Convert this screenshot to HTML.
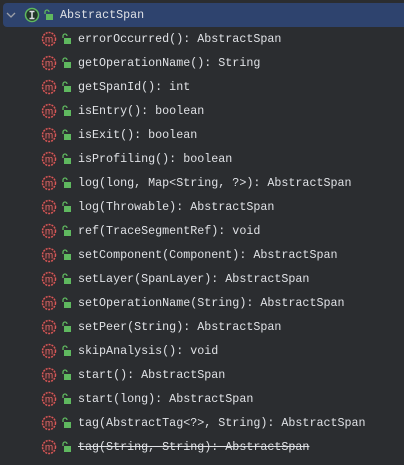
<!DOCTYPE html>
<html><head><style>
body{margin:0;width:404px;height:465px;background:#2b2d30;overflow:hidden;font-family:"Liberation Mono",monospace;font-size:11.7px;color:#dfe1e5}
.sel{position:absolute;left:3px;top:3px;width:405px;height:24px;background:#2e436e;border-radius:4px}
.row{position:absolute;left:0;height:24px;width:404px}
.t{position:absolute;top:5px;line-height:14px;white-space:pre}
svg{position:absolute}
</style></head><body>
<div class="sel"></div>
<div class="row" style="top:3px">
<svg style="left:5px;top:6px" width="12" height="12"><path d="M2 4 L6 8 L10 4" stroke="#9da0a8" stroke-width="1.3" fill="none"/></svg>
<svg style="left:24px;top:4px" width="16" height="16"><circle cx="8" cy="8" r="6.5" fill="#23352a" stroke="#5fb85f" stroke-width="1.5"/><path d="M5.5 4.5h5M5.5 11.5h5M8 4.5v7" stroke="#dfe1e5" stroke-width="1.5"/></svg>
<svg style="left:43px;top:6px" width="10" height="12"><path d="M2 5V3a2 2 0 0 1 4 0" stroke="#5fb85f" stroke-width="1.3" fill="none"/><rect x="3" y="5" width="7" height="6" fill="#5fb85f"/></svg>
<span class="t" style="left:60px">AbstractSpan</span></div>
<div id="list"></div>
<script>
var items=["errorOccurred(): AbstractSpan","getOperationName(): String","getSpanId(): int","isEntry(): boolean","isExit(): boolean","isProfiling(): boolean","log(long, Map<String, ?>): AbstractSpan","log(Throwable): AbstractSpan","ref(TraceSegmentRef): void","setComponent(Component): AbstractSpan","setLayer(SpanLayer): AbstractSpan","setOperationName(String): AbstractSpan","setPeer(String): AbstractSpan","skipAnalysis(): void","start(): AbstractSpan","start(long): AbstractSpan","tag(AbstractTag<?>, String): AbstractSpan","tag(String, String): AbstractSpan"];
var h="";
items.forEach(function(s,i){var top=27+i*24;var st=i==17?"text-decoration:line-through;":"";
h+='<div class="row" style="top:'+top+'px"><svg style="left:41px;top:4px" width="16" height="16"><circle cx="8" cy="8" r="6.5" fill="#3a2a2c" stroke="#d95757" stroke-width="1.5" stroke-dasharray="2 1"/><text x="8" y="11.5" text-anchor="middle" font-family="Liberation Sans" font-size="10" fill="#e06b6b">m</text></svg>'+
'<svg style="left:61px;top:6px" width="10" height="12"><path d="M2 5V3a2 2 0 0 1 4 0" stroke="#5fb85f" stroke-width="1.3" fill="none"/><rect x="3" y="5" width="7" height="6" fill="#5fb85f"/></svg>'+
'<span class="t" style="left:78px;'+st+'">'+s.replace(/</g,"&lt;")+'</span></div>';});
document.getElementById("list").innerHTML=h;
</script>
</body></html>
